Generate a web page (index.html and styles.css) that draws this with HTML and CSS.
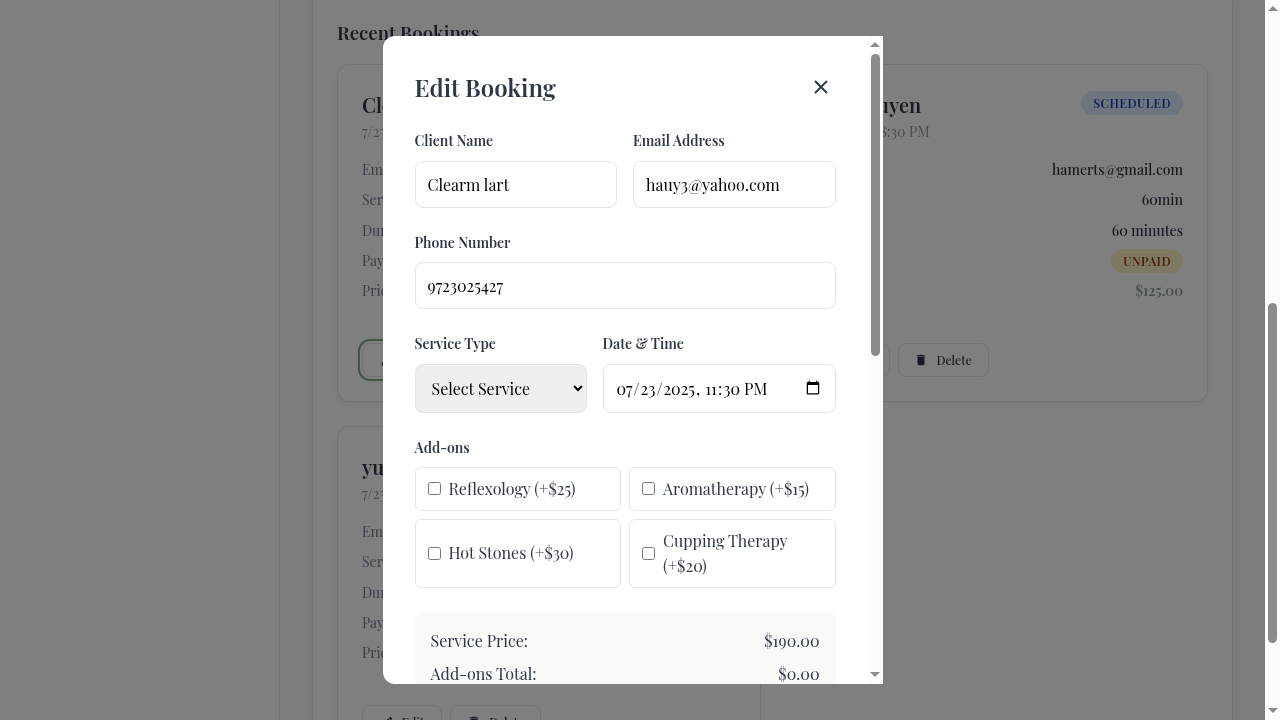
FILE: index.html
```html
<!DOCTYPE html>
<html lang="en">
<head>
<meta charset="utf-8">
<title>Bookings</title>
<link rel="stylesheet" href="styles.css">
</head>
<body>
<svg width="0" height="0" class="defs">
  <symbol id="pencil" viewBox="0 0 24 24"><path d="M3 17.25V21h3.75L17.81 9.94l-3.75-3.75L3 17.25zM20.71 7.04a1 1 0 0 0 0-1.41l-2.34-2.34a1 1 0 0 0-1.41 0l-1.83 1.83 3.75 3.75 1.83-1.83z"/></symbol>
  <symbol id="trash" viewBox="0 0 24 24"><path d="M6 7v12c0 1.100.9 2 2 2h8c1.100 0 2-.9 2-2V7H6zM19 4h-3.500l-1-1h-5l-1 1H5v2h14V4z"/></symbol>
</svg>
<div class="window">
  <div class="app">
    <aside class="sidebar"></aside>
    <main class="main">
      <section class="panel">
        <h2 class="panel-title">Recent Bookings</h2>
        <div class="bookings">
          <article class="booking">
            <header class="booking-head"><div><h3 class="name">Clearm lart</h3><p class="when">7/23/2025</p></div></header>
            <dl class="details">
              <div class="row"><dt>Email:</dt><dd></dd></div>
              <div class="row"><dt>Service:</dt><dd></dd></div>
              <div class="row"><dt>Duration:</dt><dd></dd></div>
              <div class="row"><dt>Payment:</dt><dd></dd></div>
              <div class="row"><dt>Price:</dt><dd></dd></div>
            </dl>
            <div class="actions"><button class="btn edit focused"><svg class="ico"><use href="#pencil"/></svg>Edit</button></div>
          </article>
          <article class="booking">
            <header class="booking-head"><div><h3 class="name">Han Nguyen</h3><p class="when">7/23/2025 • 8:30 PM</p></div><span class="badge scheduled">SCHEDULED</span></header>
            <dl class="details">
              <div class="row"><dt>Email:</dt><dd>hamerts@gmail.com</dd></div>
              <div class="row"><dt>Service:</dt><dd>60min</dd></div>
              <div class="row"><dt>Duration:</dt><dd>60 minutes</dd></div>
              <div class="row"><dt>Payment:</dt><dd><span class="badge unpaid">UNPAID</span></dd></div>
              <div class="row"><dt>Price:</dt><dd class="price">$125.00</dd></div>
            </dl>
            <div class="actions"><button class="btn edit"><svg class="ico"><use href="#pencil"/></svg>Edit</button><button class="btn delete"><svg class="ico"><use href="#trash"/></svg>Delete</button></div>
          </article>
          <article class="booking">
            <header class="booking-head"><div><h3 class="name">yuri</h3><p class="when">7/23/2025</p></div></header>
            <dl class="details">
              <div class="row"><dt>Email:</dt><dd></dd></div>
              <div class="row"><dt>Service:</dt><dd></dd></div>
              <div class="row"><dt>Duration:</dt><dd></dd></div>
              <div class="row"><dt>Payment:</dt><dd></dd></div>
              <div class="row"><dt>Price:</dt><dd></dd></div>
            </dl>
            <div class="actions"><button class="btn edit"><svg class="ico"><use href="#pencil"/></svg>Edit</button><button class="btn delete"><svg class="ico"><use href="#trash"/></svg>Delete</button></div>
          </article>
        </div>
      </section>
    </main>
    <div class="overlay">
      <div class="modal">
        <form class="modal-body">
          <header class="modal-head"><h2 class="modal-title">Edit Booking</h2>
            <svg class="close" viewBox="0 0 14 14"><path d="M1 1l12 12M13 1L1 13"/></svg></header>
          <div class="fields two">
            <div class="field"><label class="label">Client Name</label><input class="control" value="Clearm lart"></div>
            <div class="field"><label class="label">Email Address</label><input class="control" value="hauy3@yahoo.com"></div>
          </div>
          <div class="field"><label class="label">Phone Number</label><input class="control phone" value="9723025427"></div>
          <div class="fields service">
            <div class="field"><label class="label">Service Type</label>
              <select class="control tall select"><option>Select Service</option></select></div>
            <div class="field"><label class="label">Date &amp; Time</label>
              <input type="datetime-local" class="control tall" value="2025-07-23T23:30"></div>
          </div>
          <label class="label">Add-ons</label>
          <div class="addons">
            <label class="addon"><input type="checkbox" class="check"><span>Reflexology (+$25)</span></label>
            <label class="addon"><input type="checkbox" class="check"><span>Aromatherapy (+$15)</span></label>
            <label class="addon stones"><input type="checkbox" class="check"><span>Hot Stones (+$30)</span></label>
            <label class="addon"><input type="checkbox" class="check"><span>Cupping Therapy (+$20)</span></label>
          </div>
          <div class="summary">
            <div class="sum"><span>Service Price:</span><span>$190.00</span></div>
            <div class="sum"><span>Add-ons Total:</span><span>$0.00</span></div>
          </div>
        </form>
        <div class="scrollbar"><i class="up"></i><i class="thumb modal-thumb"></i><i class="down"></i></div>
      </div>
    </div>
  </div>
  <div class="scrollbar"><i class="up"></i><i class="thumb page-thumb"></i><i class="down"></i></div>
</div>
</body>
</html>
```
FILE: styles.css
```css
* { box-sizing: border-box; margin: 0; padding: 0; }
body { width: 1280px; height: 720px; overflow: hidden; font-family: "Playfair Display", "Liberation Serif", serif; color: #2d3748; }
.defs { position: absolute; }
.window { display: flex; width: 1280px; height: 720px; }
.app { position: relative; display: flex; width: 1265px; height: 720px; overflow: hidden; background: #fafafa; }
.sidebar { width: 280px; flex: none; background: #fff; border-right: 1px solid #e2e5e2; }
.main { width: 985px; padding: 0 32px; margin-top: -10px; will-change: transform; }
.panel { height: 900px; background: #fff; border: 1px solid #e2e5e2; border-radius: 12px; padding: 24px; box-shadow: 0 4px 12px rgba(0,0,0,.04); }
.panel-title { font-size: 18.72px; font-weight: 600; line-height: 30px; height: 49px; padding-top: 3px; }
.bookings { display: grid; grid-template-columns: 1fr 1fr; gap: 24px; }
.booking { height: 338px; border: 1px solid #e2e5e2; border-radius: 12px; padding: 24px; box-shadow: 0 2px 6px rgba(0,0,0,.05); }
.booking-head { display: flex; justify-content: space-between; align-items: flex-start; height: 65.5px; white-space: nowrap; }
.name { font-size: 20px; font-weight: 600; line-height: 31px; }
.when { font-size: 14px; line-height: 24px; letter-spacing: .08px; color: #87a58b; }
.row { display: flex; justify-content: space-between; align-items: center; height: 30.3px; font-size: 14px; font-weight: 500; }
.row dt { color: #718096; font-weight: 400; }
.badge { display: block; height: 24px; line-height: 24px; border-radius: 12px; padding: 0 12px; font-size: 12px; font-weight: 600; letter-spacing: .5px; }
.booking-head .badge { margin-top: 2px; }
.scheduled { background: #dbeafe; color: #1e40af; }
.unpaid { background: #fef3c7; color: #92400e; }
.row .price { color: #87a58b; font-weight: 600; }
.actions { display: flex; gap: 8px; margin-top: 37px; }
.btn { display: flex; align-items: center; justify-content: center; gap: 8px; height: 34px; border: 1px solid #e2e8e3; border-radius: 8px; background: #fff; color: #2d3748; font: 500 12.2px "Playfair Display", "Liberation Serif", serif; }
.edit { width: 80px; }
.delete { width: 91px; }
.focused { outline: 2px solid #87a88b; outline-offset: 2px; }
.ico { width: 14px; height: 14px; fill: currentColor; }

.overlay { position: absolute; inset: 0; display: flex; align-items: center; justify-content: center; background: rgba(0,0,0,.5); will-change: transform; }
.modal { display: flex; width: 500px; height: 648px; border-radius: 12px 0 0 12px; overflow: hidden; background: #fff; }
.modal-body { width: 485px; padding: 31px 32px 32px; }
.modal-head { display: flex; justify-content: space-between; align-items: center; height: 39.3px; margin-bottom: 24px; }
.modal-title { font-size: 24px; font-weight: 600; }
.close { width: 14px; height: 14px; margin-right: 8px; stroke: #2d3748; stroke-width: 1.9; fill: none; }
.fields { display: grid; gap: 16px; }
.two { grid-template-columns: 1fr 1fr; }
.service { grid-template-columns: 172px 1fr; }
.field { margin-bottom: 24px; }
.label { display: block; height: 20px; line-height: 22px; margin-bottom: 10.5px; font-size: 14px; font-weight: 600; }
.control { display: block; width: 100%; height: 47px; padding: 0 12px; border: 1px solid #e0e7e2; border-radius: 8px; background: #fff; color: #000; font: 16px "Playfair Display", "Liberation Serif", serif; }
.phone { padding-bottom: 1px; }
.tall { height: 49px; }
.select { background: #efefef; }
.addons { display: grid; grid-template-columns: 1fr 1fr; grid-template-rows: 44px 69px; gap: 8px; }
.addon { display: flex; align-items: center; gap: 8px; border: 1px solid #e0e7e2; border-radius: 6px; padding: 0 12px 1.2px; font-size: 16px; line-height: 25px; }
.stones { line-height: 24.8px; }
.check { width: 13px; height: 13px; flex: none; }
.summary { margin-top: 24px; height: 160px; padding: 12px 16px; border-radius: 8px; background: #f8faf8; }
.sum { display: flex; justify-content: space-between; align-items: center; height: 33px; font-size: 16px; }

.scrollbar { display: flex; flex-direction: column; align-items: center; width: 15px; flex: none; background: #fcfcfc; }
.up, .down { border-left: 5px solid transparent; border-right: 5px solid transparent; }
.up { margin-top: 6px; border-bottom: 5px solid #8b8b8b; }
.down { margin-top: auto; margin-bottom: 7px; border-top: 5px solid #8b8b8b; }
.thumb { width: 9px; border-radius: 5px; background: #8b8b8b; }
.modal-thumb { margin-top: 7px; height: 302px; }
.page-thumb { margin-top: 292px; height: 340px; }
```
